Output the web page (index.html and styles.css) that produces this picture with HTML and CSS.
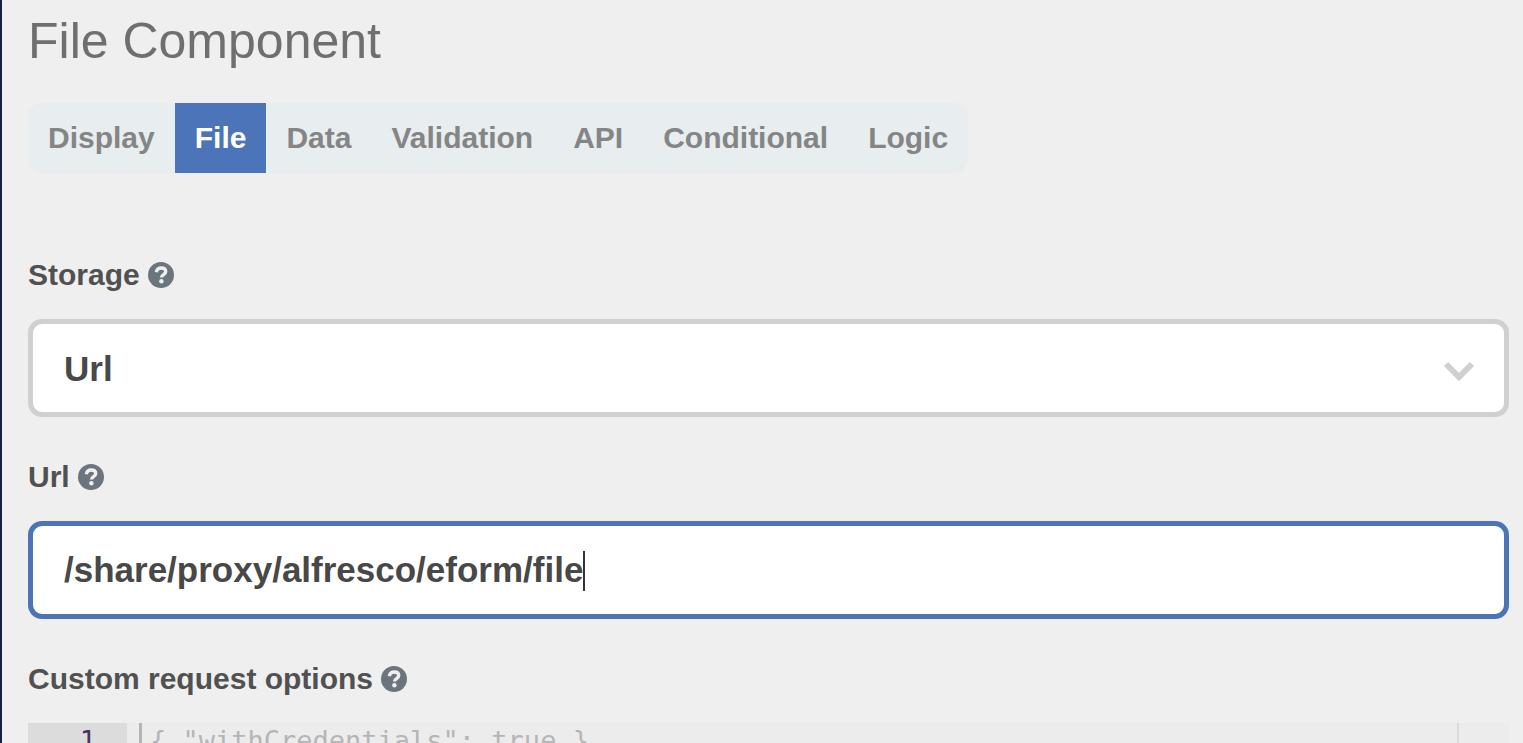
FILE: index.html
```html
<!DOCTYPE html>
<html lang="en">
<head>
<meta charset="utf-8">
<title>File Component</title>
<link rel="stylesheet" href="styles.css">
</head>
<body>
<svg class="defs" aria-hidden="true">
  <symbol id="help" viewBox="0 0 26 26">
    <circle cx="13" cy="13" r="13" fill="#6c757d"/>
    <path d="M8.300 10.200C8.800 7.300 10.600 6 13.200 6c2.700 0 4.500 1.400 4.500 3.600 0 3.300-4.200 2.900-4.200 6" fill="none" stroke="#efefef" stroke-width="3.400"/>
    <circle cx="13.400" cy="19.300" r="2.200" fill="#efefef"/>
  </symbol>
</svg>
<main class="panel">
  <h1 class="title">File Component</h1>
  <nav class="tabs">
    <a class="tab" href="#display">Display</a>
    <a class="tab tab-active" href="#file" aria-current="page">File</a>
    <a class="tab" href="#data">Data</a>
    <a class="tab" href="#validation">Validation</a>
    <a class="tab" href="#api">API</a>
    <a class="tab" href="#conditional">Conditional</a>
    <a class="tab" href="#logic">Logic</a>
  </nav>
  <form class="form">
    <div class="field">
      <div class="label-row">
        <label for="storage">Storage</label>
        <svg class="help" aria-hidden="true"><use href="#help"/></svg>
      </div>
      <div class="control-wrap">
        <select class="control" id="storage"><option>Url</option></select>
        <svg class="chevron" viewBox="0 0 32 20" aria-hidden="true"><path d="M3 3l13 13L29 3"/></svg>
      </div>
    </div>
    <div class="field">
      <div class="label-row">
        <label for="url">Url</label>
        <svg class="help" aria-hidden="true"><use href="#help"/></svg>
      </div>
      <div class="control-wrap">
        <input class="control control-focused" id="url" type="text" value="/share/proxy/alfresco/eform/file" spellcheck="false">
        <span class="caret"></span>
      </div>
    </div>
    <div class="field">
      <div class="label-row">
        <label for="options">Custom request options</label>
        <svg class="help" aria-hidden="true"><use href="#help"/></svg>
      </div>
      <div class="editor">
        <div class="gutter">1</div>
        <textarea class="code" id="options" placeholder='{ "withCredentials": true }' spellcheck="false"></textarea>
        <div class="print-margin"></div>
      </div>
    </div>
  </form>
</main>
</body>
</html>
```
FILE: styles.css
```css
* { box-sizing: border-box; }

body {
  margin: 0;
  background: #efefef;
  font-family: "Liberation Sans", Arial, sans-serif;
}

.defs { display: none; }

.panel {
  height: 100vh;
  overflow: hidden;
  padding: 12px 14px 0 26px;
  border-left: 2px solid #15233f;
}

.title {
  margin: 0 0 33px;
  font-size: 50px;
  font-weight: 400;
  line-height: 58px;
  color: #6f6f6f;
}

.tabs {
  display: flex;
  width: fit-content;
  background: #e8edef;
  border-radius: 14px;
}

.tab {
  padding: 0 20px;
  font-size: 30px;
  font-weight: 700;
  line-height: 70px;
  color: #858585;
  text-decoration: none;
}

.tab-active {
  background: #4b74b9;
  color: #fff;
}

.form {
  display: flex;
  flex-direction: column;
  gap: 40px;
  padding-top: 82px;
}

.field {
  display: flex;
  flex-direction: column;
  gap: 24px;
}

.label-row {
  display: flex;
  align-items: center;
  gap: 8px;
  font-size: 30px;
  font-weight: 700;
  line-height: 40px;
  color: #515151;
}

.help {
  width: 26px;
  height: 26px;
}

.control-wrap { position: relative; }

.control {
  display: block;
  width: 100%;
  height: 98px;
  padding: 0 31px;
  border: 5px solid #d0d0d0;
  border-radius: 14px;
  outline: 0;
  appearance: none;
  background: #fff;
  font: 700 35px "Liberation Sans", Arial, sans-serif;
  color: #484848;
}

.control-focused { border-color: #4b74b9; }

.chevron {
  position: absolute;
  top: 42px;
  right: 34px;
  width: 32px;
  height: 20px;
  fill: none;
  stroke: #d0d0d0;
  stroke-width: 6;
  pointer-events: none;
}

.caret {
  position: absolute;
  top: 30px;
  left: 555px;
  width: 2px;
  height: 40px;
  background: #333;
}

.editor {
  display: flex;
  height: 200px;
  background: #ececec;
  font: 27px/36px "DejaVu Sans Mono", monospace;
}

.gutter {
  width: 99px;
  padding-right: 31px;
  background: #dcdcdc;
  color: #45355f;
  text-align: right;
}

.code {
  flex: 1;
  margin-left: 12px;
  padding: 0 0 0 8px;
  border: 0;
  border-left: 3px solid #b5b5b5;
  outline: 0;
  resize: none;
  background: transparent;
  font: inherit;
}

.code::placeholder { color: #b5b5b5; opacity: 1; }

.print-margin {
  width: 52px;
  border-left: 2px solid #dadada;
}
```
